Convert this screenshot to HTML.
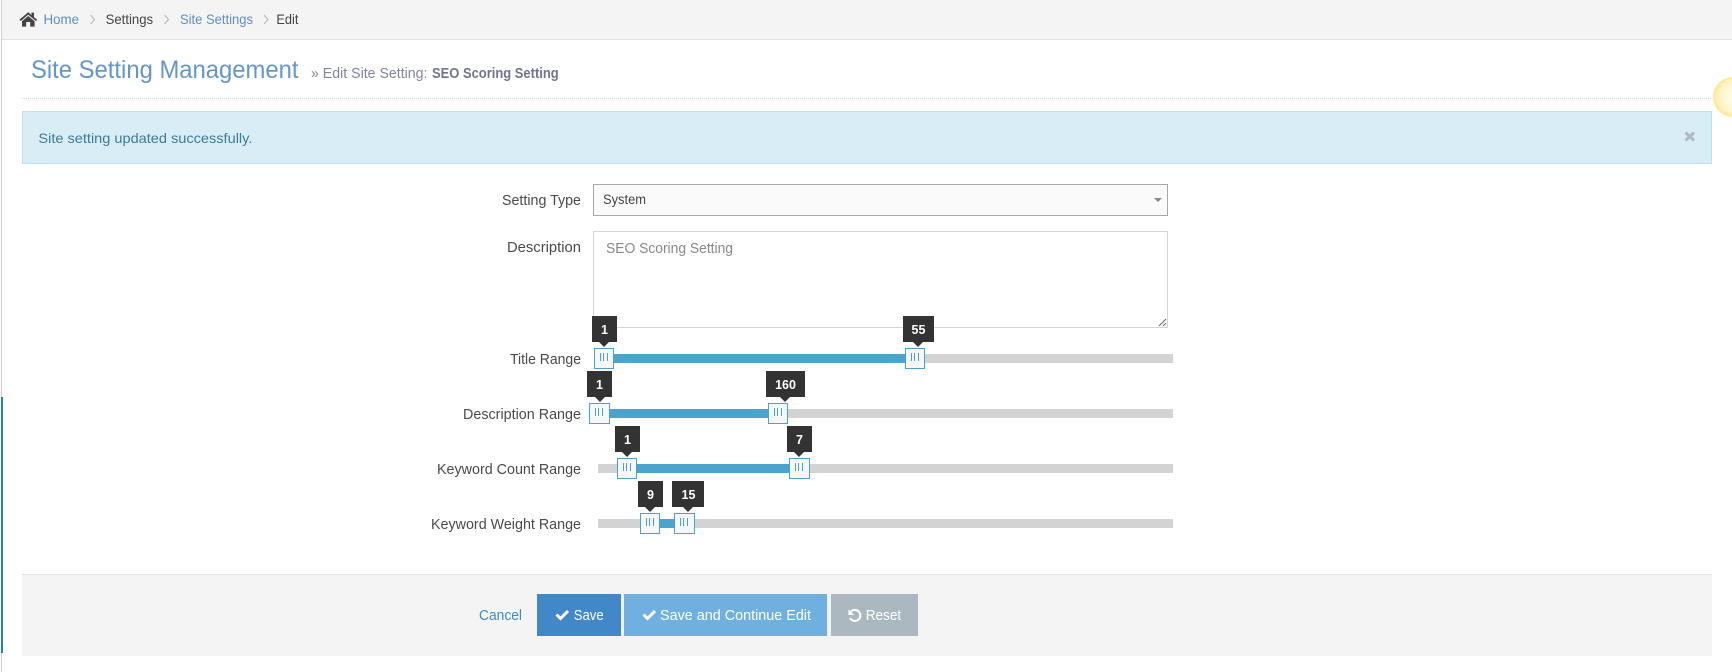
<!DOCTYPE html>
<html lang="en"><head><meta charset="utf-8"><title>Site Setting Management</title>
<style>
html,body{margin:0;padding:0;background:#fff;width:1732px;height:672px;overflow:hidden}
svg{display:block;position:absolute;left:0;top:0}
text{font-family:"Liberation Sans",sans-serif;font-size:14px;fill:#444}
.l{fill:#5c8fc2}.lab{fill:#4a4a4a;font-size:14.5px}
.tip rect,.tip path{fill:#333}
.tip text{fill:#fff;font-weight:700;font-size:12.5px;text-anchor:middle}
.h rect{fill:#f7f7f7;stroke:#4aa3cf;stroke-width:1;shape-rendering:crispEdges}
.h path{stroke:#4aa3cf;stroke-width:1;fill:none;shape-rendering:crispEdges}
.tr{fill:#d3d3d3}.fi{fill:#4ba4ce}
.b{fill:#fff;font-size:14.5px}
</style></head><body>
<svg width="1732" height="672" viewBox="0 0 1732 672" xmlns="http://www.w3.org/2000/svg">
<defs>
<radialGradient id="g" cx="0.55" cy="0.5" r="0.55"><stop offset="0" stop-color="#fffdf0"/><stop offset="0.7" stop-color="#fff6c8"/><stop offset="1" stop-color="#ffe58c"/></radialGradient>
</defs>
<rect x="1" y="0" width="1" height="672" fill="#cfcfcf"/>
<rect x="1" y="397" width="2" height="256" fill="#2a7fc0"/>
<!-- breadcrumb -->
<rect x="2" y="0" width="1730" height="39" fill="#f4f4f4"/>
<rect x="2" y="39" width="1730" height="1" fill="#e3e3e3"/>
<path d="M19.5 19.6 28.2 12.2 31.5 15V12.6H34V17.1L37.2 19.8 36 21.1 28.2 14.6 20.7 21.1ZM22 21.2 28.2 16 34.6 21.2V26.6H30.2V22H26.2V26.6H22Z" fill="#444"/>
<text class="l" x="43.5" y="24" textLength="35.5" lengthAdjust="spacingAndGlyphs">Home</text>
<path d="M90.5 15 94.5 19.5 90.5 24" fill="none" stroke="#b7b7c0" stroke-width="1.1"/>
<text x="105.6" y="24" textLength="47.5" lengthAdjust="spacingAndGlyphs">Settings</text>
<path d="M164.5 15 168.5 19.5 164.5 24" fill="none" stroke="#b7b7c0" stroke-width="1.1"/>
<text class="l" x="180" y="24" textLength="73" lengthAdjust="spacingAndGlyphs">Site Settings</text>
<path d="M264 15 268 19.5 264 24" fill="none" stroke="#b7b7c0" stroke-width="1.1"/>
<text x="276.4" y="24" textLength="22" lengthAdjust="spacingAndGlyphs">Edit</text>
<!-- title -->
<text x="31" y="78" textLength="267.5" lengthAdjust="spacingAndGlyphs" style="font-size:25px;fill:#6496c9">Site Setting Management</text>
<text x="311" y="78" textLength="116.5" lengthAdjust="spacingAndGlyphs" style="font-size:14.5px;fill:#80859f">» Edit Site Setting:</text>
<text x="432" y="78" textLength="126.7" lengthAdjust="spacingAndGlyphs" style="font-size:14.5px;font-weight:700;fill:#6f7590">SEO Scoring Setting</text>
<line x1="22" y1="98.5" x2="1712" y2="98.5" stroke="#d9d9d9" stroke-dasharray="1 1"/>
<!-- alert -->
<rect x="22.5" y="111.5" width="1689" height="52" fill="#d9edf6" stroke="#bfe3ee"/>
<text x="38.4" y="143" textLength="214" lengthAdjust="spacingAndGlyphs" style="fill:#3d7a9c">Site setting updated successfully.</text>
<path d="M1685.5 132.5 1694 140.5M1694 132.5 1685.5 140.5" stroke="#aebbc4" stroke-width="3"/>
<circle cx="1733" cy="97" r="20" fill="url(#g)"/>
<!-- fields -->
<text class="lab" x="581" y="205" text-anchor="end" textLength="79" lengthAdjust="spacingAndGlyphs">Setting Type</text>
<rect x="593.5" y="184.5" width="574" height="31" fill="#fafafa" stroke="#a8a8a8"/>
<text x="603" y="204" textLength="43" lengthAdjust="spacingAndGlyphs" style="font-size:13.5px">System</text>
<path d="M1154 198H1162L1158 202Z" fill="#888"/>
<text class="lab" x="581" y="252" text-anchor="end" textLength="74" lengthAdjust="spacingAndGlyphs">Description</text>
<rect x="593.5" y="231.5" width="574" height="96" fill="#fff" stroke="#d4d4d4"/>
<text x="606" y="253" textLength="127" lengthAdjust="spacingAndGlyphs" style="font-size:14.5px;fill:#888">SEO Scoring Setting</text>
<path d="M1159 326 1166 319M1163 326 1166 323" stroke="#666" stroke-width="1"/>
<!-- Title Range -->
<text class="lab" x="581" y="364" text-anchor="end" textLength="71" lengthAdjust="spacingAndGlyphs">Title Range</text>
<rect class="tr" x="598" y="354" width="575" height="9"/>
<rect class="fi" x="598" y="354" width="310" height="9"/>
<g class="tip"><rect x="592" y="316" width="25" height="26"/><path d="M599 342H609L604 347Z"/><text x="604.5" y="334">1</text></g>
<g class="tip"><rect x="903" y="316" width="31" height="26"/><path d="M913 342H923L918 347Z"/><text x="918.5" y="334">55</text></g>
<g class="h"><rect x="594.5" y="348.5" width="19" height="20"/><path d="M600.5 353V361M603.5 353V361M607.5 353V361"/></g>
<g class="h"><rect x="905.5" y="348.5" width="19" height="20"/><path d="M911.5 353V361M914.5 353V361M918.5 353V361"/></g>
<!-- Description Range -->
<text class="lab" x="581" y="419" text-anchor="end" textLength="118" lengthAdjust="spacingAndGlyphs">Description Range</text>
<rect class="tr" x="598" y="409" width="575" height="9"/>
<rect class="fi" x="598" y="409" width="175" height="9"/>
<g class="tip"><rect x="587" y="371" width="25" height="26"/><path d="M595 397H605L600 402Z"/><text x="599.5" y="389">1</text></g>
<g class="tip"><rect x="766" y="371" width="39" height="26"/><path d="M780 397H790L785 402Z"/><text x="785.5" y="389">160</text></g>
<g class="h"><rect x="589.5" y="403.5" width="20" height="20"/><path d="M595.5 408V416M598.5 408V416M602.5 408V416"/></g>
<g class="h"><rect x="768.5" y="403.5" width="19" height="20"/><path d="M774.5 408V416M777.5 408V416M781.5 408V416"/></g>
<!-- Keyword Count Range -->
<text class="lab" x="581" y="474" text-anchor="end" textLength="144" lengthAdjust="spacingAndGlyphs">Keyword Count Range</text>
<rect class="tr" x="598" y="464" width="575" height="9"/>
<rect class="fi" x="625" y="464" width="170" height="9"/>
<g class="tip"><rect x="615" y="426" width="25" height="26"/><path d="M622 452H632L627 457Z"/><text x="627.5" y="444">1</text></g>
<g class="tip"><rect x="787" y="426" width="25" height="26"/><path d="M794 452H804L799 457Z"/><text x="799.5" y="444">7</text></g>
<g class="h"><rect x="617.5" y="458.5" width="19" height="20"/><path d="M623.5 463V471M626.5 463V471M630.5 463V471"/></g>
<g class="h"><rect x="789.5" y="458.5" width="20" height="20"/><path d="M795.5 463V471M798.5 463V471M802.5 463V471"/></g>
<!-- Keyword Weight Range -->
<text class="lab" x="581" y="529" text-anchor="end" textLength="150" lengthAdjust="spacingAndGlyphs">Keyword Weight Range</text>
<rect class="tr" x="598" y="519" width="575" height="9"/>
<rect class="fi" x="650" y="519" width="30" height="9"/>
<g class="tip"><rect x="638" y="481" width="25" height="26"/><path d="M645 507H655L650 512Z"/><text x="650.5" y="499">9</text></g>
<g class="tip"><rect x="672" y="481" width="32" height="26"/><path d="M683 507H693L688 512Z"/><text x="688.5" y="499">15</text></g>
<g class="h"><rect x="640.5" y="513.5" width="19" height="20"/><path d="M646.5 518V526M649.5 518V526M653.5 518V526"/></g>
<g class="h"><rect x="674.5" y="513.5" width="20" height="20"/><path d="M680.5 518V526M683.5 518V526M687.5 518V526"/></g>
<!-- footer -->
<rect x="22" y="574" width="1690" height="82" fill="#f4f4f4"/>
<rect x="22" y="574" width="1690" height="1" fill="#e4e4e4"/>
<text x="479" y="620" textLength="43" lengthAdjust="spacingAndGlyphs" style="font-size:14.5px;fill:#3a8ccc">Cancel</text>
<rect x="537" y="594" width="84" height="42" fill="#4088c8"/>
<path d="M556.5 614.5 560.5 618.5 568 611" fill="none" stroke="#fff" stroke-width="3"/>
<text class="b" x="573.7" y="620" textLength="30" lengthAdjust="spacingAndGlyphs">Save</text>
<rect x="624" y="594" width="203" height="42" fill="#6fb0e0"/>
<path d="M643.5 614.5 647.5 618.5 655 611" fill="none" stroke="#fff" stroke-width="3"/>
<text class="b" x="660" y="620" textLength="151" lengthAdjust="spacingAndGlyphs">Save and Continue Edit</text>
<rect x="831" y="594" width="87" height="42" fill="#acb8c0"/>
<path d="M851 611.5A5.5 5.5 0 1 1 850 618" fill="none" stroke="#fff" stroke-width="2"/>
<path d="M848.5 609.5V615H854Z" fill="#fff"/>
<text class="b" x="865.7" y="620" textLength="35.5" lengthAdjust="spacingAndGlyphs">Reset</text>
</svg>
</body></html>
